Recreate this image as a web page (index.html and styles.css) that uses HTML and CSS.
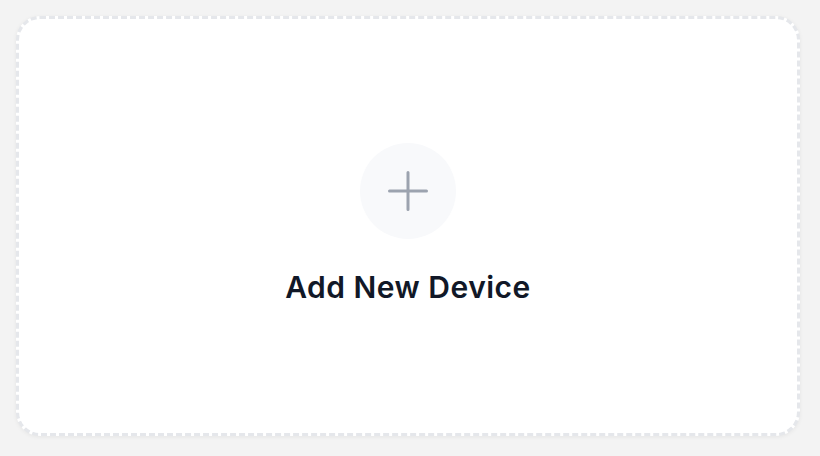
FILE: index.html
```html
<!DOCTYPE html>
<html lang="en">
<head>
    <meta charset="UTF-8">
    <meta name="viewport" content="width=device-width, initial-scale=1.0">
    <title>Add Device</title>
    <link rel="stylesheet" href="styles.css">
</head>
<body>
    <div class="add-device-card">
        <div class="plus-circle">
            <svg width="48" height="48" viewBox="0 0 48 48" fill="none" stroke="#9ca3af" stroke-width="3" stroke-linecap="round">
                <path d="M24 5.5v37M5.5 24h37"/>
            </svg>
        </div>
        <h2 class="add-device-title">Add New Device</h2>
    </div>
</body>
</html>
```

FILE: styles.css
```css
html, body {
    height: 100%;
}

body {
    margin: 0;
    padding: 16px 20px 20px 16px;
    box-sizing: border-box;
    background-color: #f3f3f3;
    font-family: Inter, "Noto Sans", sans-serif;
}

.add-device-card {
    height: 100%;
    box-sizing: border-box;
    padding-bottom: 4px;
    background-color: #fff;
    border: 3px dashed #e5e7eb;
    border-radius: 24px;
    box-shadow: 0 1px 4px rgba(0, 0, 0, 0.06);
    display: flex;
    flex-direction: column;
    align-items: center;
    justify-content: center;
    gap: 30px;
}

.plus-circle {
    width: 96px;
    height: 96px;
    border-radius: 50%;
    background-color: #f8f9fb;
    display: flex;
    align-items: center;
    justify-content: center;
}

.add-device-title {
    margin: 0;
    font-size: 30px;
    line-height: 36px;
    font-weight: 600;
    letter-spacing: 0.5px;
    color: #111827;
}
```
